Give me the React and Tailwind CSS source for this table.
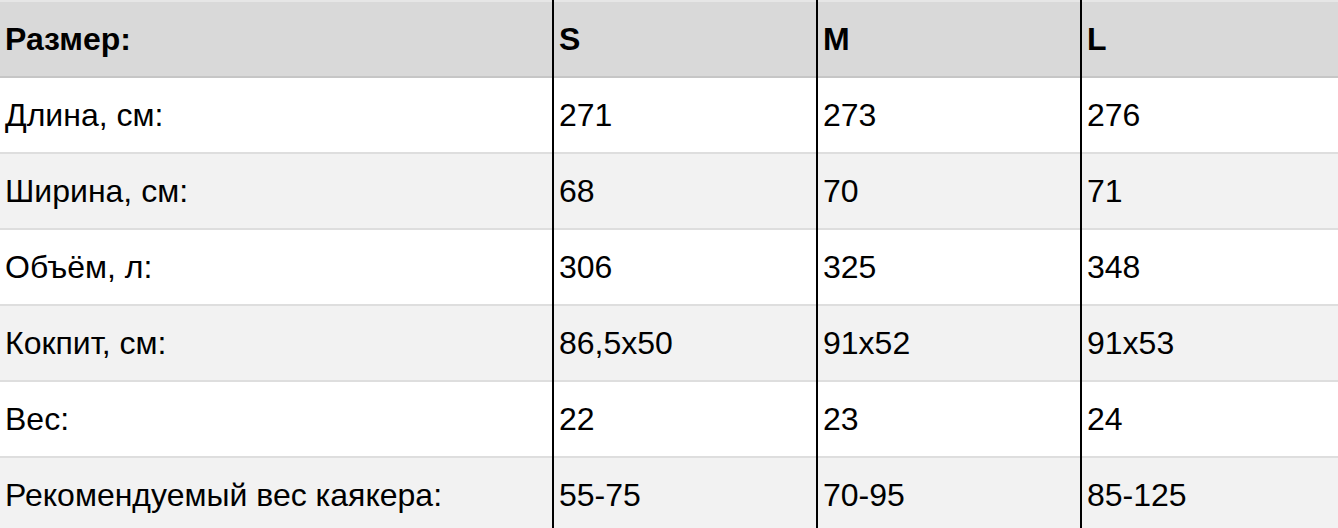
const header = ["Размер:", "S", "M", "L"];
const rows = [
  ["Длина, см:", "271", "273", "276"],
  ["Ширина, см:", "68", "70", "71"],
  ["Объём, л:", "306", "325", "348"],
  ["Кокпит, см:", "86,5x50", "91x52", "91x53"],
  ["Вес:", "22", "23", "24"],
  ["Рекомендуемый вес каякера:", "55-75", "70-95", "85-125"],
];

function Column({ index }) {
  const first = index === 0;
  return (
    <div
      className={
        first
          ? "flex w-[552px] shrink-0 flex-col"
          : "flex w-[264px] shrink-0 flex-col border-l-2 border-black"
      }
    >
      <div className="flex h-[78px] items-center border-t-2 border-b-2 border-t-[#e6e6e6] border-b-[#c6c6c6] bg-[#d9d9d9] pl-[5px] font-bold">
        {header[index]}
      </div>
      {rows.map((r, i) => (
        <div
          key={i}
          className={
            i % 2 === 0
              ? "flex h-[76px] items-center border-b-2 border-[#dedede] bg-white pl-[5px]"
              : "flex h-[76px] items-center border-b-2 border-[#dedede] bg-[#f2f2f2] pl-[5px]"
          }
        >
          {r[index]}
        </div>
      ))}
    </div>
  );
}

export default function App() {
  return (
    <div className="h-[528px] w-[1338px] overflow-hidden bg-white font-['Liberation_Sans',Arial,sans-serif] text-[32px] leading-none text-black">
      <div className="flex w-[1344px]">
        {[0, 1, 2, 3].map((i) => (
          <Column key={i} index={i} />
        ))}
      </div>
    </div>
  );
}
